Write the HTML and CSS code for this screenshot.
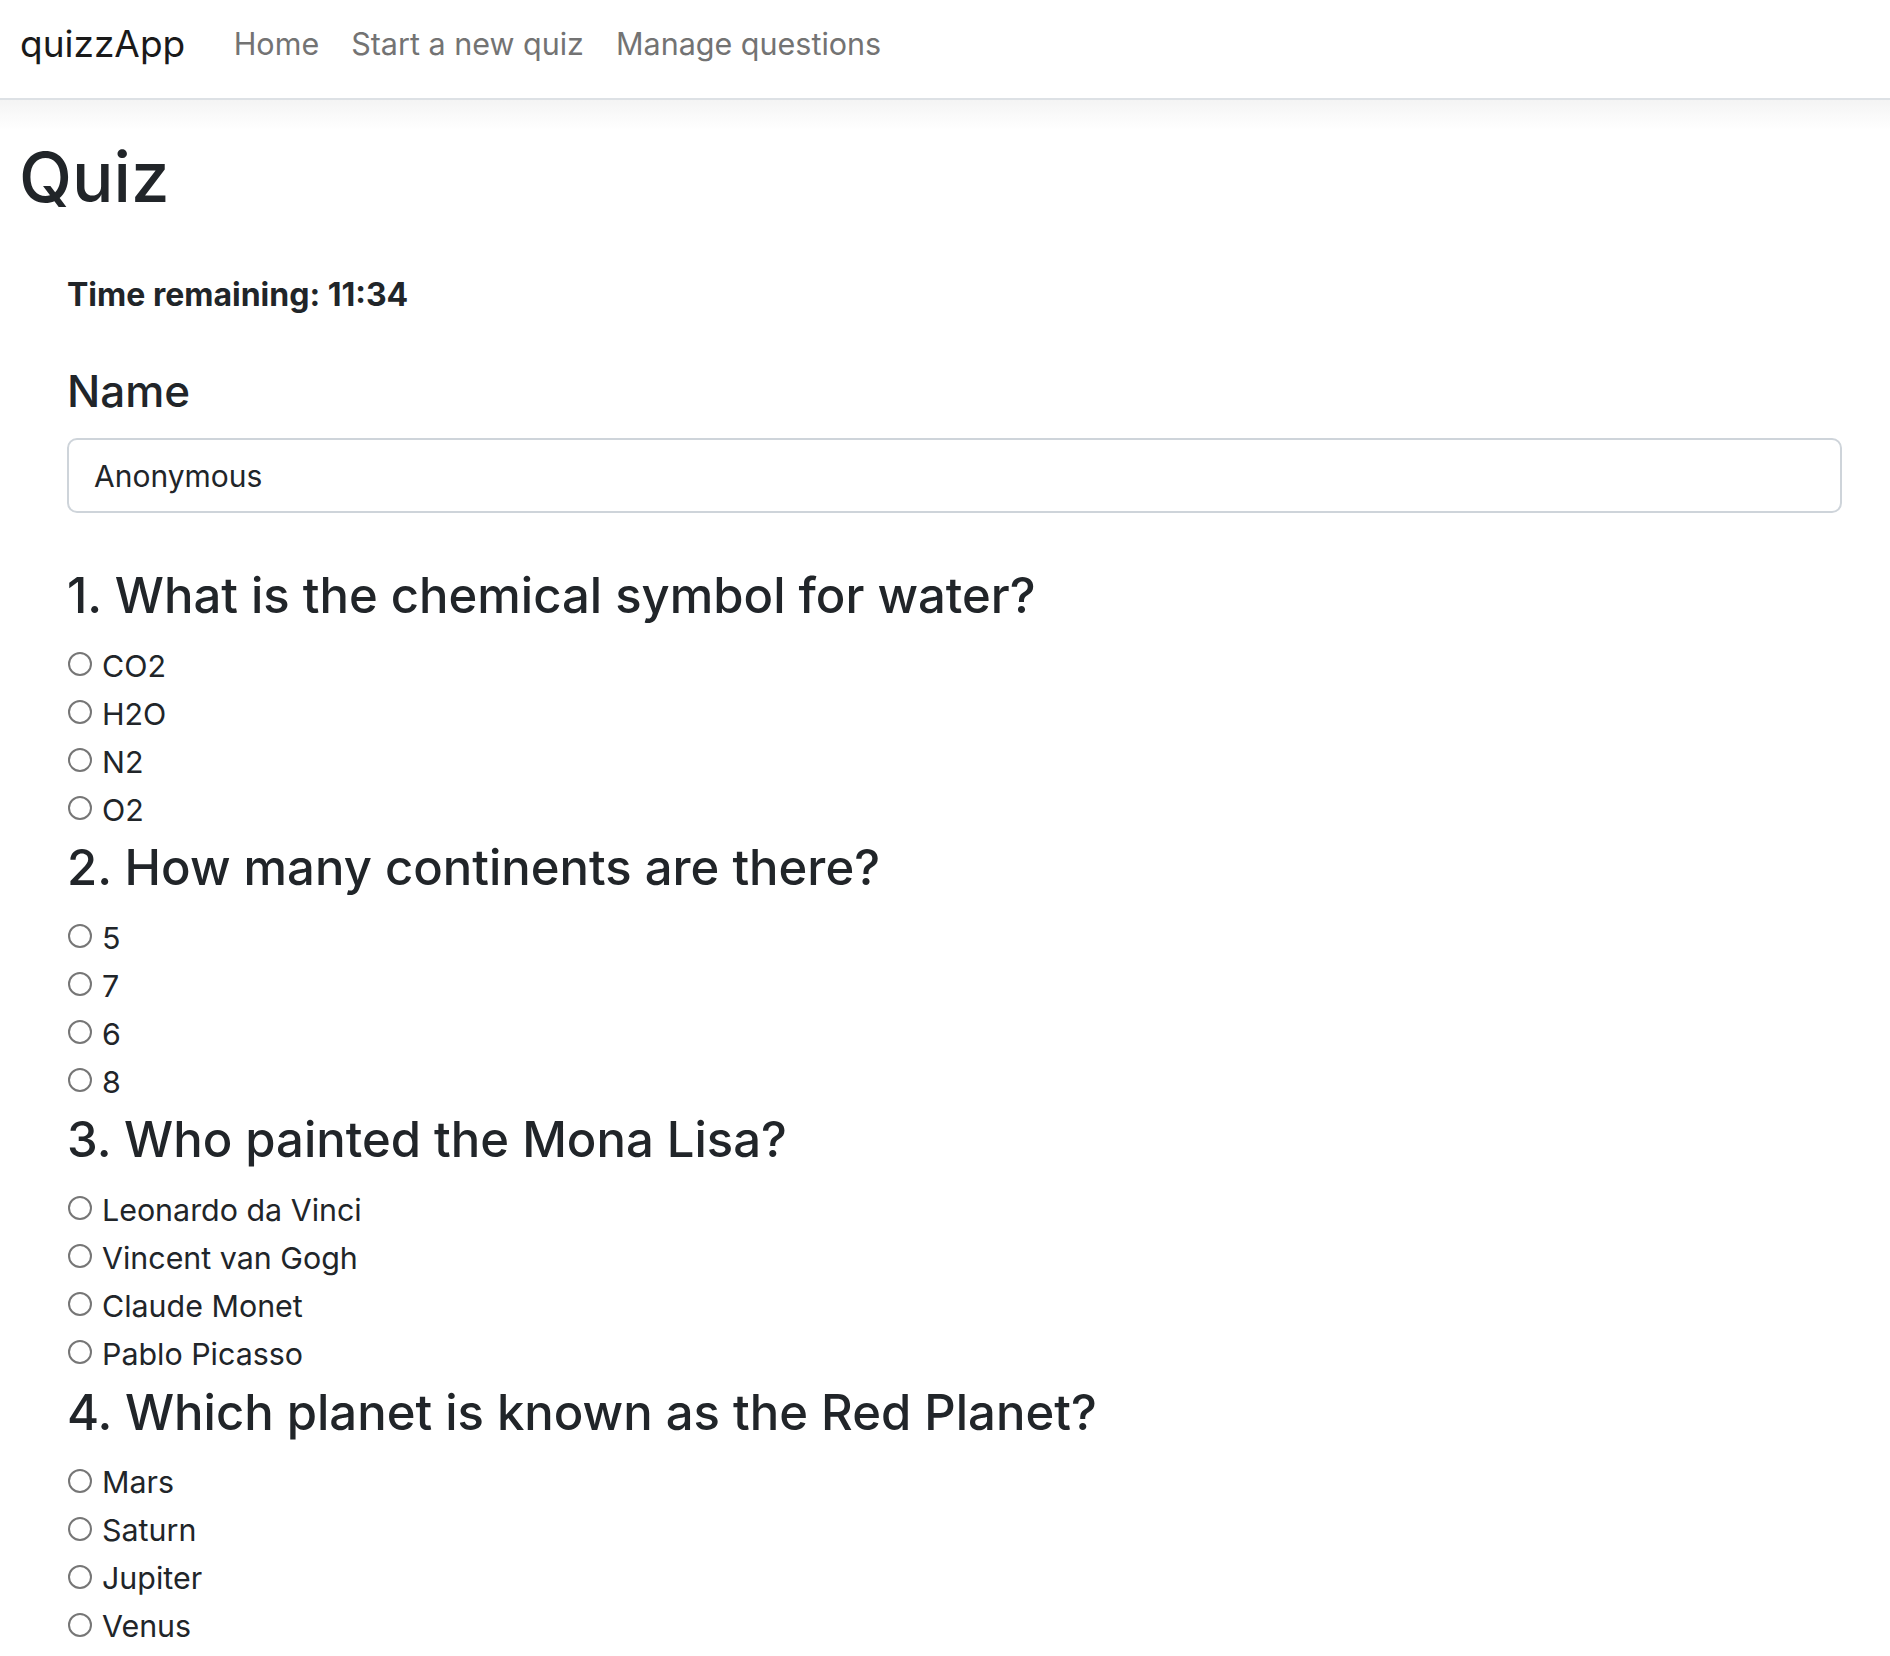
FILE: index.html
```html
<!DOCTYPE html>
<html lang="en">
<head>
<meta charset="utf-8">
<title>quizzApp</title>
<link rel="stylesheet" href="styles.css">
</head>
<body>
<nav class="navbar">
  <a class="brand" href="#">quizzApp</a>
  <ul class="nav-links">
    <li><a href="#">Home</a></li>
    <li><a href="#">Start a new quiz</a></li>
    <li><a href="#">Manage questions</a></li>
  </ul>
</nav>
<main class="page">
  <h1 class="title">Quiz</h1>
  <form class="quiz-form">
    <p class="timer">Time remaining: 11:34</p>
    <label class="name-label" for="name">Name</label>
    <input class="name-input" id="name" type="text" value="Anonymous">

    <section class="question">
      <h3 class="question-title">1. What is the chemical symbol for water?</h3>
      <ul class="options">
        <li><label class="option"><input type="radio" name="q1"><span>CO2</span></label></li>
        <li><label class="option"><input type="radio" name="q1"><span>H2O</span></label></li>
        <li><label class="option"><input type="radio" name="q1"><span>N2</span></label></li>
        <li><label class="option"><input type="radio" name="q1"><span>O2</span></label></li>
      </ul>
    </section>

    <section class="question">
      <h3 class="question-title">2. How many continents are there?</h3>
      <ul class="options">
        <li><label class="option"><input type="radio" name="q2"><span>5</span></label></li>
        <li><label class="option"><input type="radio" name="q2"><span>7</span></label></li>
        <li><label class="option"><input type="radio" name="q2"><span>6</span></label></li>
        <li><label class="option"><input type="radio" name="q2"><span>8</span></label></li>
      </ul>
    </section>

    <section class="question">
      <h3 class="question-title">3. Who painted the Mona Lisa?</h3>
      <ul class="options">
        <li><label class="option"><input type="radio" name="q3"><span>Leonardo da Vinci</span></label></li>
        <li><label class="option"><input type="radio" name="q3"><span>Vincent van Gogh</span></label></li>
        <li><label class="option"><input type="radio" name="q3"><span>Claude Monet</span></label></li>
        <li><label class="option"><input type="radio" name="q3"><span>Pablo Picasso</span></label></li>
      </ul>
    </section>

    <section class="question">
      <h3 class="question-title">4. Which planet is known as the Red Planet?</h3>
      <ul class="options">
        <li><label class="option"><input type="radio" name="q4"><span>Mars</span></label></li>
        <li><label class="option"><input type="radio" name="q4"><span>Saturn</span></label></li>
        <li><label class="option"><input type="radio" name="q4"><span>Jupiter</span></label></li>
        <li><label class="option"><input type="radio" name="q4"><span>Venus</span></label></li>
      </ul>
    </section>
  </form>
</main>
</body>
</html>
```
FILE: styles.css
```css
* { box-sizing: border-box; }

html, body {
  margin: 0;
  padding: 0;
  background: #ffffff;
}

body {
  font-family: Inter, "Noto Sans", "Liberation Sans", sans-serif;
  color: #212529;
  font-size: 30px;
}

a { text-decoration: none; }

/* Navbar */
.navbar {
  display: flex;
  align-items: flex-start;
  height: 100px;
  padding: 20px 0 0 20px;
  background: #ffffff;
  border-bottom: 2px solid #dde1e5;
}

.brand {
  font-size: 37px;
  line-height: 48px;
  color: #1a1a1a;
  margin-right: 32.5px;
}

.nav-links {
  display: flex;
  list-style: none;
  margin: 0;
  padding: 0;
}

.nav-links a {
  display: block;
  font-size: 30.5px;
  line-height: 48px;
  padding: 0 16px;
  color: #737373;
}

/* Page */
.page {
  padding: 35px 48px 40px 19px;
  background: linear-gradient(#f4f4f4, #ffffff 30px) no-repeat;
}

.title {
  margin: 0;
  font-size: 69px;
  line-height: 84px;
  font-weight: 500;
}

.quiz-form {
  margin-left: 48px;
}

.timer {
  margin: 53px 0 0;
  font-size: 32px;
  line-height: 45px;
  font-weight: 700;
}

.name-label {
  display: block;
  margin-top: 46px;
  font-size: 44px;
  line-height: 56px;
  font-weight: 500;
}

.name-input {
  display: block;
  width: 100%;
  height: 75px;
  margin-top: 19px;
  padding: 0 25px;
  border: 2px solid #ced4da;
  border-radius: 10px;
  font-family: inherit;
  font-size: 30px;
  color: #212529;
  background: #fff;
}

.question:first-of-type {
  margin-top: 54px;
}

.question-title {
  margin: 0 0 17px;
  font-size: 49px;
  line-height: 57.6px;
  font-weight: 500;
}

.options {
  list-style: none;
  margin: 0 0 5.6px;
  padding: 0;
}

.option {
  display: flex;
  align-items: center;
  height: 48px;
  font-size: 30.4px;
  line-height: 48px;
}

.option input {
  appearance: none;
  -webkit-appearance: none;
  width: 24px;
  height: 24px;
  margin: 0 10px 3px 1px;
  border: 2px solid #767676;
  border-radius: 50%;
  background: #fff;
  flex: none;
}
```
